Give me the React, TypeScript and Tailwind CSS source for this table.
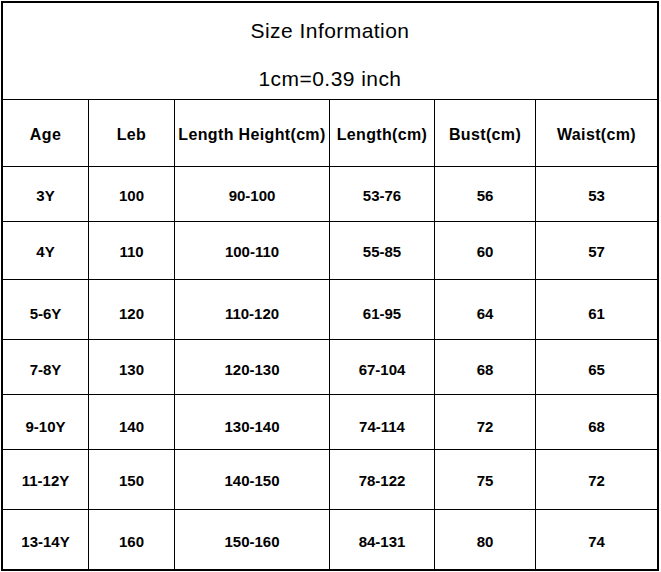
const cols = [
  'w-[85px]',
  'w-[86px] border-l border-black',
  'w-[155px] border-l border-black',
  'w-[105px] border-l border-black',
  'w-[101px] border-l border-black',
  'w-[122px] border-l border-black',
];

const header = ['Age', 'Leb', 'Length Height(cm)', 'Length(cm)', 'Bust(cm)', 'Waist(cm)'];

// row heights and small text offsets measured from the picture
const rows = [
  { h: 'h-[55px]', pt: 'pt-[5px]', cells: ['3Y', '100', '90-100', '53-76', '56', '53'] },
  { h: 'h-[58px]', pt: 'pt-[3px]', cells: ['4Y', '110', '100-110', '55-85', '60', '57'] },
  { h: 'h-[60px]', pt: 'pt-[10px]', cells: ['5-6Y', '120', '110-120', '61-95', '64', '61'] },
  { h: 'h-[55px]', pt: 'pt-[7px]', cells: ['7-8Y', '130', '120-130', '67-104', '68', '65'] },
  { h: 'h-[55px]', pt: 'pt-[11px]', cells: ['9-10Y', '140', '130-140', '74-114', '72', '68'] },
  { h: 'h-[60px]', pt: 'pt-[4px]', cells: ['11-12Y', '150', '140-150', '78-122', '75', '72'] },
  { h: 'h-[60px]', pt: 'pt-[5px]', cells: ['13-14Y', '160', '150-160', '84-131', '80', '74'] },
];

export default function App() {
  return (
    <div className="w-[661px] h-[572px] bg-white text-black font-['Liberation_Sans',Arial,sans-serif]">
      <div className="ml-[1px] mt-[1px] w-[658px] h-[570px] border-2 border-black">
        {/* Title */}
        <div className="h-[96px] flex flex-col items-center pt-[16px] gap-[24px] text-[21px] tracking-[0.45px] leading-[24px]">
          <div>Size Information</div>
          <div>1cm=0.39 inch</div>
        </div>

        {/* Header row */}
        <div className="flex h-[67px] border-t border-black text-[16px] tracking-[0.35px] font-bold">
          {header.map((t, i) => (
            <div key={t} className={`${cols[i]} flex items-center justify-center pt-[3px] whitespace-nowrap`}>
              {t}
            </div>
          ))}
        </div>

        {rows.map((r) => (
          <div key={r.cells[0]} className={`flex ${r.h} border-t border-black text-[15px] font-bold`}>
            {r.cells.map((c, i) => (
              <div key={i} className={`${cols[i]} flex items-center justify-center ${r.pt}`}>
                {c}
              </div>
            ))}
          </div>
        ))}
      </div>
    </div>
  );
}
